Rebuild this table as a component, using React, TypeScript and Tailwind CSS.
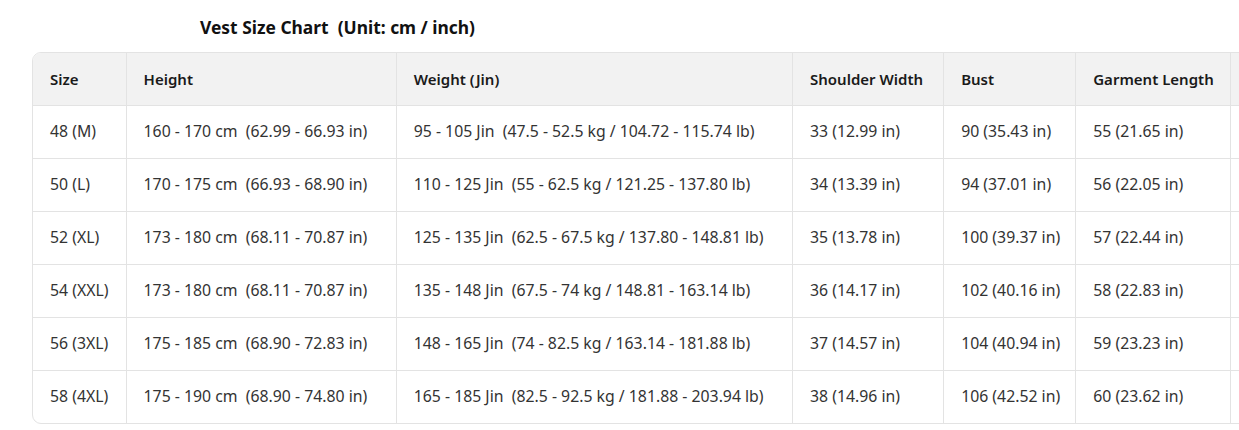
import React from "react";

const headers = ["Size", "Height", "Weight (Jin)", "Shoulder Width", "Bust", "Garment Length", ""];
const widths = ["w-[93px]", "w-[270px]", "w-[396px]", "w-[151px]", "w-[132px]", "w-[155px]", "w-[160px]"];

const rows: string[][] = [
  ["48 (M)", "160 - 170 cm  (62.99 - 66.93 in)", "95 - 105 Jin  (47.5 - 52.5 kg / 104.72 - 115.74 lb)", "33 (12.99 in)", "90 (35.43 in)", "55 (21.65 in)", ""],
  ["50 (L)", "170 - 175 cm  (66.93 - 68.90 in)", "110 - 125 Jin  (55 - 62.5 kg / 121.25 - 137.80 lb)", "34 (13.39 in)", "94 (37.01 in)", "56 (22.05 in)", ""],
  ["52 (XL)", "173 - 180 cm  (68.11 - 70.87 in)", "125 - 135 Jin  (62.5 - 67.5 kg / 137.80 - 148.81 lb)", "35 (13.78 in)", "100 (39.37 in)", "57 (22.44 in)", ""],
  ["54 (XXL)", "173 - 180 cm  (68.11 - 70.87 in)", "135 - 148 Jin  (67.5 - 74 kg / 148.81 - 163.14 lb)", "36 (14.17 in)", "102 (40.16 in)", "58 (22.83 in)", ""],
  ["56 (3XL)", "175 - 185 cm  (68.90 - 72.83 in)", "148 - 165 Jin  (74 - 82.5 kg / 163.14 - 181.88 lb)", "37 (14.57 in)", "104 (40.94 in)", "59 (23.23 in)", ""],
  ["58 (4XL)", "175 - 190 cm  (68.90 - 74.80 in)", "165 - 185 Jin  (82.5 - 92.5 kg / 181.88 - 203.94 lb)", "38 (14.96 in)", "106 (42.52 in)", "60 (23.62 in)", ""],
];

export default function App() {
  return (
    <div
      className="w-[1239px] h-[430px] overflow-hidden bg-white"
      style={{ fontFamily: '"Noto Sans", "Open Sans", sans-serif' }}
    >
      <div className="pt-[14px] pl-[200px] h-[52px] text-[17.4px] font-bold text-[#111] whitespace-pre leading-[26px]">
        {"Vest Size Chart  (Unit: cm / inch)"}
      </div>
      <div className="ml-[32px] w-[1360px] rounded-l-[9px] border border-[#e3e3e3] overflow-hidden">
        <table className="border-collapse table-fixed w-full">
          <thead>
            <tr className="bg-[#f2f2f2] h-[52px]">
              {headers.map((h, i) => (
                <th
                  key={i}
                  className={`${widths[i]} text-left font-semibold text-[15px] text-[#1a1a1a] pl-[17px] border-l border-[#e3e3e3] first:border-l-0 whitespace-pre`}
                >
                  {h}
                </th>
              ))}
            </tr>
          </thead>
          <tbody>
            {rows.map((r, ri) => (
              <tr key={ri} className="h-[53px] border-t border-[#e3e3e3]">
                {r.map((c, ci) => (
                  <td
                    key={ci}
                    className="text-[15.8px] text-[#333] pl-[17px] border-l border-[#e3e3e3] first:border-l-0 whitespace-pre"
                  >
                    {c}
                  </td>
                ))}
              </tr>
            ))}
          </tbody>
        </table>
      </div>
    </div>
  );
}
